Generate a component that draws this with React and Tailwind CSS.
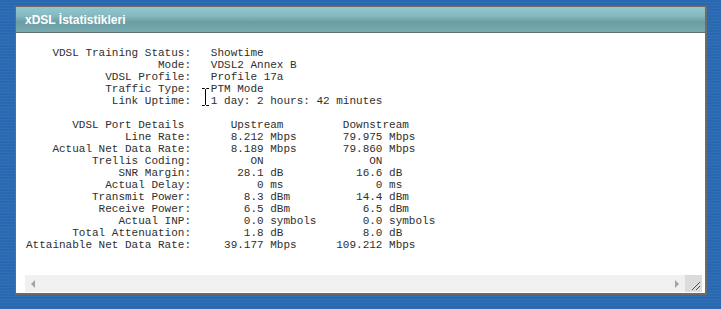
import React from "react";

const top = [
  ["VDSL Training Status:", "Showtime"],
  ["Mode:", "VDSL2 Annex B"],
  ["VDSL Profile:", "Profile 17a"],
  ["Traffic Type:", "PTM Mode"],
  ["Link Uptime:", "1 day: 2 hours: 42 minutes"],
];

const rows = [
  ["Line Rate:", "8.212", "Mbps", "79.975", "Mbps"],
  ["Actual Net Data Rate:", "8.189", "Mbps", "79.860", "Mbps"],
  ["Trellis Coding:", "ON", "", "ON", ""],
  ["SNR Margin:", "28.1", "dB", "16.6", "dB"],
  ["Actual Delay:", "0", "ms", "0", "ms"],
  ["Transmit Power:", "8.3", "dBm", "14.4", "dBm"],
  ["Receive Power:", "6.5", "dBm", "6.5", "dBm"],
  ["Actual INP:", "0.0", "symbols", "0.0", "symbols"],
  ["Total Attenuation:", "1.8", "dB", "8.0", "dB"],
  ["Attainable Net Data Rate:", "39.177", "Mbps", "109.212", "Mbps"],
];

function buildText() {
  const lines = [];
  for (const [l, v] of top) lines.push(l.padStart(25) + "   " + v);
  lines.push("");
  lines.push("VDSL Port Details".padStart(24).padEnd(31) + "Upstream".padEnd(17) + "Downstream");
  for (const [l, un, uu, dn, du] of rows) {
    let s = l.padStart(25) + un.padStart(11) + (uu ? " " + uu : "");
    s = s.padEnd(54 - dn.length) + dn + (du ? " " + du : "");
    lines.push(s);
  }
  return lines.join("\n");
}

export default function App() {
  return (
    <div className="w-[721px] h-[309px] pt-[6px] pl-[15px] bg-[repeating-linear-gradient(to_bottom,#2a69b1_0px,#2a69b1_2px,#2e6fb6_2px,#2e6fb6_3px)]">
      <div className="w-[692px] h-[289px] flex flex-col border border-[#6b6b6b] border-r-2 border-b-2">
        <div className="h-[26px] shrink-0 flex items-center pl-[9px] border-b border-[#5f6f70] bg-[linear-gradient(to_bottom,#95c6cd_0%,#86b8bf_35%,#6b9ea4_60%,#78abb0_100%)]">
          <span className="text-white font-bold text-[12px] [font-family:'Liberation_Sans',Arial,sans-serif]">
            xDSL İstatistikleri
          </span>
        </div>
        <div className="flex-1 bg-white flex flex-col pl-[9px] pr-[3px] pb-[1px]">
          <div className="flex-1 relative pt-[14px] pl-[1px]">
            <pre className="m-0 text-[11px] leading-[12px] text-[#2e2e2e] [font-family:'Liberation_Mono','Courier_New',monospace]">
              {buildText()}
            </pre>
            <svg className="absolute left-[176px] top-[54px]" width="9" height="20" viewBox="0 0 9 20">
              <path d="M1 1.5 H3.5 L4.5 2.5 L5.5 1.5 H8 M4.5 2.5 V17.5 M1 18.5 H3.5 L4.5 17.5 L5.5 18.5 H8" stroke="#ffffff" strokeWidth="2.2" fill="none" />
              <path d="M1 1.5 H3.5 L4.5 2.5 L5.5 1.5 H8 M4.5 2.5 V17.5 M1 18.5 H3.5 L4.5 17.5 L5.5 18.5 H8" stroke="#000000" strokeWidth="1" fill="none" />
            </svg>
          </div>
          <div className="h-[17px] shrink-0 flex bg-[#f0f0f0]">
            <div className="w-[17px] flex items-center justify-center">
              <svg width="5" height="8" viewBox="0 0 5 8"><path d="M4 0 V8 L0 4 Z" fill="#a3a3a3" /></svg>
            </div>
            <div className="flex-1" />
            <div className="w-[17px] flex items-center justify-center">
              <svg width="5" height="8" viewBox="0 0 5 8"><path d="M1 0 V8 L5 4 Z" fill="#a3a3a3" /></svg>
            </div>
            <div className="w-[17px] bg-[#dcdcdc] relative">
              <svg className="absolute right-[1px] bottom-[1px]" width="12" height="12" viewBox="0 0 12 12">
                <path d="M11 3 L3 11 M11 7 L7 11" stroke="#555" strokeWidth="1" />
              </svg>
            </div>
          </div>
        </div>
      </div>
    </div>
  );
}
